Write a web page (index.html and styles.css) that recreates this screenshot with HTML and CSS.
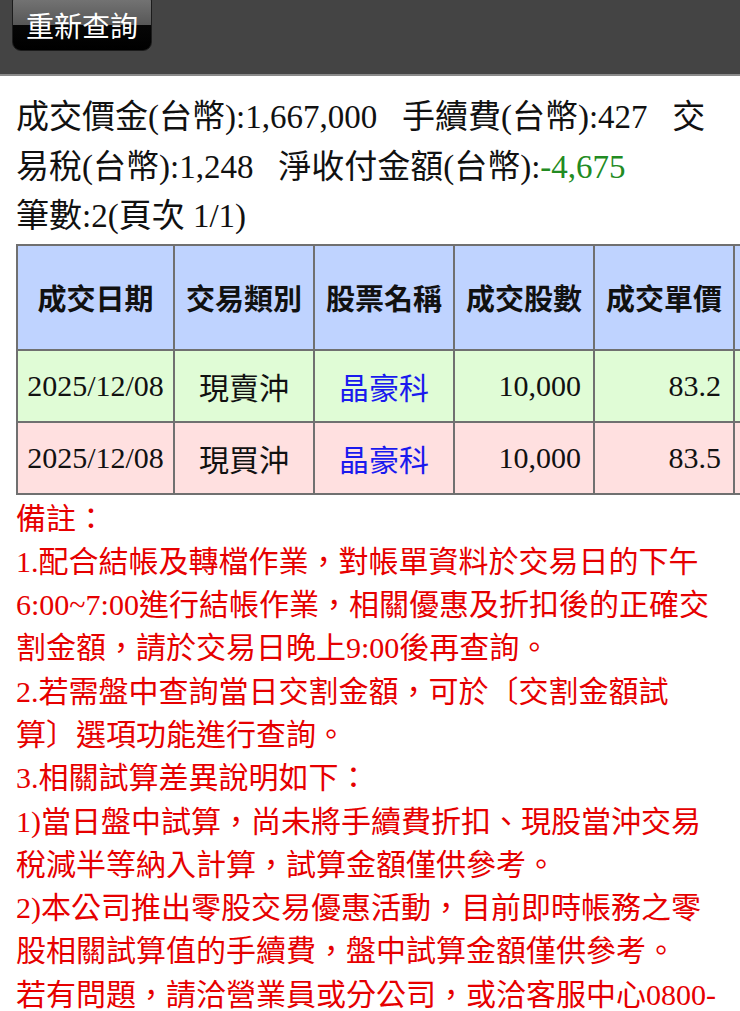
FILE: index.html
```html
<!DOCTYPE html>
<html lang="zh-Hant">
<head>
    <meta charset="UTF-8">
    <meta name="viewport" content="width=device-width, initial-scale=1">
    <title>當日交割金額查詢</title>
    <link rel="stylesheet" href="styles.css">
</head>
<body>
    <div class="topbar">
        <span class="btn-requery">重新查詢</span>
    </div>
    <section class="content">
        <p class="summary">成交價金(台幣):1,667,000&nbsp;&nbsp;&nbsp;手續費(台幣):427&nbsp;&nbsp;&nbsp;交易稅(台幣):1,248&nbsp;&nbsp;&nbsp;淨收付金額(台幣):<span class="neg">-4,675</span><br>筆數:2(頁次 1/1)</p>
        <div class="table-wrap">
            <table class="deal-table">
                <colgroup>
                    <col class="c-date">
                    <col class="c-std"><col class="c-std"><col class="c-std"><col class="c-std">
                    <col class="c-std"><col class="c-std"><col class="c-std"><col class="c-std">
                </colgroup>
                <tr>
                    <th>成交日期</th>
                    <th>交易類別</th>
                    <th>股票名稱</th>
                    <th>成交股數</th>
                    <th>成交單價</th>
                    <th>成交價金</th>
                    <th>手續費</th>
                    <th>交易稅</th>
                    <th>淨收付</th>
                </tr>
                <tr class="row-sell">
                    <td class="date">2025/12/08</td>
                    <td>現賣沖</td>
                    <td class="stock">晶豪科</td>
                    <td class="num">10,000</td>
                    <td class="num">83.2</td>
                    <td class="num">832,000</td>
                    <td class="num">213</td>
                    <td class="num">1,248</td>
                    <td class="num">830,539</td>
                </tr>
                <tr class="row-buy">
                    <td class="date">2025/12/08</td>
                    <td>現買沖</td>
                    <td class="stock">晶豪科</td>
                    <td class="num">10,000</td>
                    <td class="num">83.5</td>
                    <td class="num">835,000</td>
                    <td class="num">214</td>
                    <td class="num">0</td>
                    <td class="num">-835,214</td>
                </tr>
            </table>
        </div>
        <div class="notes">
            備註：<br>
            1.配合結帳及轉檔作業，對帳單資料於交易日的下午6:00~7:00進行結帳作業，相關優惠及折扣後的正確交割金額，請於交易日晚上9:00後再查詢。<br>
            2.若需盤中查詢當日交割金額，可於〔交割金額試算〕選項功能進行查詢。<br>
            3.相關試算差異說明如下：<br>
            1)當日盤中試算，尚未將手續費折扣、現股當沖交易稅減半等納入計算，試算金額僅供參考。<br>
            2)本公司推出零股交易優惠活動，目前即時帳務之零股相關試算值的手續費，盤中試算金額僅供參考。<br>
            若有問題，請洽營業員或分公司，或洽客服中心0800-
        </div>
    </section>
</body>
</html>
```
FILE: styles.css
```css
*{
    margin: 0;
    padding: 0;
    box-sizing: border-box;
}
html{
    font-family: "Liberation Serif", "Noto Sans CJK TC", serif;
    color: #111;
    text-spacing-trim: space-all;
}
body{
    background: #fff;
    overflow: hidden;
}

/*---頂部工具列---*/
.topbar{
    display: flex;
    align-items: flex-start;
    height: 76px;
    padding-left: 12px;
    background: #444;
    border-bottom: 2px solid #8a8a8a;
}
.topbar .btn-requery{
    display: block;
    margin-top: -8px;
    width: 140px;
    height: 59px;
    padding-top: 8px;
    border: 1px solid #1c1c1c;
    border-radius: 9px;
    background: linear-gradient(#7a7a7a 0, #575757 56%, #060606 56%, #000 100%);
    color: #fff;
    font-family: "Noto Sans CJK TC", sans-serif;
    font-size: 28px;
    line-height: 49px;
    text-align: center;
    cursor: pointer;
}

/*---內容---*/
.content{
    padding: 0 14px 0 16px;
}
.summary{
    margin-top: 17px;
    font-size: 33px;
    line-height: 49.5px;
}
.summary .neg{
    color: #228b22;
}

.table-wrap{
    margin-top: 2px;
    margin-right: -14px;
    overflow: hidden;
}
.deal-table{
    border-collapse: collapse;
    table-layout: fixed;
    width: 1259px;
    border: 2px solid #555;
}
.deal-table .c-date{
    width: 157px;
}
.deal-table .c-std{
    width: 140px;
}
.deal-table th,
.deal-table td{
    border: 2px solid #707070;
    white-space: nowrap;
}
.deal-table th{
    height: 105px;
    background: #bfd3ff;
    font-family: "Liberation Sans", "Noto Sans CJK TC", sans-serif;
    font-weight: bold;
    font-size: 29px;
    text-align: center;
}
.deal-table td{
    height: 72px;
    padding: 0 12px;
    font-size: 30px;
    text-align: center;
}
.deal-table td.date{
    padding: 0 4px;
}
.deal-table td.num{
    text-align: right;
}
.deal-table td.stock{
    color: #1a1aee;
}
.deal-table .row-sell td{
    background: #e0fcd6;
}
.deal-table .row-buy td{
    background: #ffe0e0;
}

/*---備註---*/
.notes{
    margin-top: 2px;
    color: #e60000;
    font-size: 30px;
    line-height: 43.3px;
}
```
